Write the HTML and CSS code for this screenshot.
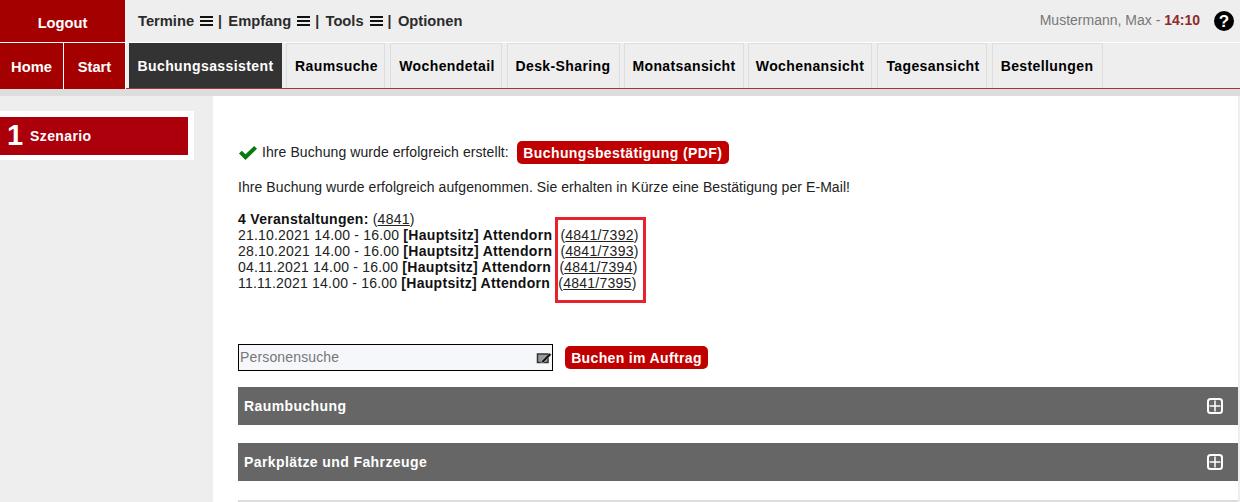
FILE: index.html
```html
<!DOCTYPE html>
<html lang="de">
<head>
<meta charset="utf-8">
<title>Buchungsassistent</title>
<link rel="stylesheet" href="styles.css">
</head>
<body>
<header class="top">
  <a class="logout">Logout</a>
  <nav class="menu">
    <span class="menu-item">Termine <svg class="burger" viewBox="0 0 13 10"><path d="M0 1h13M0 5h13M0 9h13"/></svg></span><span class="sep">|</span>
    <span class="menu-item">Empfang <svg class="burger" viewBox="0 0 13 10"><path d="M0 1h13M0 5h13M0 9h13"/></svg></span><span class="sep">|</span>
    <span class="menu-item">Tools <svg class="burger" viewBox="0 0 13 10"><path d="M0 1h13M0 5h13M0 9h13"/></svg></span><span class="sep">|</span>
    <span class="menu-item">Optionen</span>
  </nav>
  <div class="user">Mustermann, Max - <b>14:10</b></div>
  <svg class="help" viewBox="0 0 20 20"><circle cx="10" cy="10" r="10" fill="#000"/><text x="10" y="16" text-anchor="middle" class="help-q">?</text></svg>
</header>
<div class="tabrow">
  <a class="home home-first">Home</a>
  <a class="home home-second">Start</a>
  <div class="tabs">
    <a class="tab active t1">Buchungsassistent</a>
    <a class="tab t2">Raumsuche</a>
    <a class="tab t3">Wochendetail</a>
    <a class="tab t4">Desk-Sharing</a>
    <a class="tab t5">Monatsansicht</a>
    <a class="tab t6">Wochenansicht</a>
    <a class="tab t7">Tagesansicht</a>
    <a class="tab t8">Bestellungen</a>
  </div>
</div>
<div class="stripe"></div>
<div class="body">
  <aside class="side">
    <div class="step-card"><div class="step"><span class="num">1</span><span class="step-label">Szenario</span></div></div>
  </aside>
  <main class="main">
    <div class="success">
      <svg class="check" viewBox="0 0 18 14"><path d="M0 7.500 2.800 4.700l3.700 3.600L15.200 0 18 2.800 6.500 14z"/></svg>
      <span>Ihre Buchung wurde erfolgreich erstellt:</span>
      <a class="btn btn-pdf">Buchungsbestätigung (PDF)</a>
    </div>
    <p class="note">Ihre Buchung wurde erfolgreich aufgenommen. Sie erhalten in Kürze eine Bestätigung per E-Mail!</p>
    <div class="list">
      <div class="redbox"></div>
      <div><b>4 Veranstaltungen:</b> (<a class="lnk">4841</a>)</div>
      <div>21.10.2021 14.00 - 16.00 <b>[Hauptsitz] Attendorn</b> &nbsp;(<a class="lnk">4841/7392</a>)</div>
      <div>28.10.2021 14.00 - 16.00 <b>[Hauptsitz] Attendorn</b> &nbsp;(<a class="lnk">4841/7393</a>)</div>
      <div>04.11.2021 14.00 - 16.00 <b>[Hauptsitz] Attendorn</b> &nbsp;(<a class="lnk">4841/7394</a>)</div>
      <div>11.11.2021 14.00 - 16.00 <b>[Hauptsitz] Attendorn</b> &nbsp;(<a class="lnk">4841/7395</a>)</div>
    </div>
    <div class="search-row">
      <div class="search">
        <span class="ph">Personensuche</span>
        <svg class="edit" viewBox="0 0 16 12"><path class="edit-box" d="M1.500 2h10.500v8.500H1.500z"/><path class="edit-pen" d="M5.500 9 13.500 1 15.500 2.800 7.500 10.500l-2.500.5z"/></svg>
      </div>
      <a class="btn btn-buchen">Buchen im Auftrag</a>
    </div>
    <section class="bar"><span>Raumbuchung</span><svg class="plus" viewBox="0 0 16 16"><rect x="1" y="1" width="14" height="14" rx="2.500"/><path class="plus-mark" d="M8 2.500v11M2.500 8h11"/></svg></section>
    <section class="bar bar-second"><span>Parkplätze und Fahrzeuge</span><svg class="plus" viewBox="0 0 16 16"><rect x="1" y="1" width="14" height="14" rx="2.500"/><path class="plus-mark" d="M8 2.500v11M2.500 8h11"/></svg></section>
    <div class="rule"></div>
  </main>
</div>
</body>
</html>
```
FILE: styles.css
```css
* { box-sizing: border-box; }
html, body { margin: 0; height: 502px; overflow: hidden; }
body { background: #eee; font-family: "Liberation Sans", Arial, sans-serif; font-size: 14px; color: #222; }
.top { display: flex; align-items: stretch; height: 43px; background: #eee; border-bottom: 1px solid #fff; }
.logout { width: 125px; background: #a50000; color: #fff; font-weight: 700; font-size: 14.7px; display: flex; align-items: center; justify-content: center; padding-top: 4px; }
.menu { display: flex; align-items: center; padding: 0 0 0 13px; font-weight: 700; font-size: 14.7px; color: #2b2b2b; height: 42px; }
.menu-item { display: inline-flex; align-items: center; gap: 6px; }
.burger { width: 13px; height: 10px; stroke: #111; stroke-width: 2; fill: none; shape-rendering: crispEdges; }
.sep { margin: 0 6.4px 0 5px; font-size: 14px; }
.user { margin-left: auto; padding-top: 12px; font-size: 14px; color: #777; }
.user b { color: #8f2a2a; }
.help { width: 20px; height: 20px; margin: 11px 6px 0 14px; }
.help-q { font: 700 17px "Liberation Sans", sans-serif; fill: #fff; }
.tabrow { display: flex; height: 46px; background: #eee; border-bottom: 1px solid #a33; }
.home { background: #a50000; color: #fff; font-weight: 700; font-size: 14.7px; display: flex; align-items: center; justify-content: center; height: 46px; padding-top: 1px; }
.home-first { width: 64px; border-right: 1px solid #fff; }
.home-second { width: 62px; border-right: 1px solid #fff; }
.tabs { display: flex; margin-left: 3px; height: 45px; }
.tab { display: flex; align-items: center; justify-content: center; background: #eee; border: 1px solid #ddd; border-bottom: 0; color: #000; font-weight: 700; font-size: 14px; letter-spacing: .4px; padding-bottom: 1px; }
.tab.active { background: #333; color: #fff; border-color: #333; }
.t1 { width: 153px; }
.t2 { width: 99px; margin-left: 4px; padding-left: 2px; }
.t3 { width: 112px; margin-left: 5px; padding-left: 2px; }
.t4 { width: 113px; margin-left: 5px; padding-right: 1px; }
.t5 { width: 120px; margin-left: 4px; }
.t6 { width: 124px; margin-left: 4px; }
.t7 { width: 110px; margin-left: 5px; padding-left: 2px; }
.t8 { width: 111px; margin-left: 5px; padding-right: 1px; }
.stripe { height: 7px; background: #ddd; }
.body { display: flex; height: 406px; }
.side { width: 213px; padding-top: 15px; }
.step-card { width: 194px; height: 49px; background: #fff; padding: 6px 6px 5px 0; }
.step { height: 38px; background: #ab000b; color: #fff; display: flex; align-items: center; font-weight: 700; }
.num { font-size: 29px; width: 30px; padding-left: 7px; margin-top: -2px; }
.step-label { font-size: 14px; letter-spacing: .4px; margin-top: -1px; }
.main { width: 1025px; background: #fff; padding: 45px 0 0 25px; position: relative; }
.success { display: flex; align-items: center; height: 23px; }
.check { width: 18px; height: 14px; fill: #0a7a10; margin: 1px 5px 0 1px; }
.success span { letter-spacing: .08px; margin-top: -1px; }
.btn { display: inline-flex; align-items: center; justify-content: center; background: #c00000; color: #fff; font-weight: 700; font-size: 14px; height: 23px; border-radius: 5px; letter-spacing: .35px; }
.btn-pdf { width: 212px; margin-left: 8px; letter-spacing: .4px; }
.note { margin: 15px 0 0; line-height: 16px; letter-spacing: .07px; }
.list { position: relative; margin-top: 16px; line-height: 16px; color: #222; letter-spacing: .2px; }
.list b { color: #111; letter-spacing: .3px; }
.lnk { text-decoration: underline; letter-spacing: .25px; }
.redbox { position: absolute; left: 317px; top: 6px; width: 91px; height: 86px; border: 3px solid #e8212e; }
.search-row { display: flex; align-items: center; margin-top: 53px; height: 27px; }
.search { width: 315px; height: 27px; background: #f5f7fb; border: 1px solid #000; display: flex; align-items: center; justify-content: space-between; padding: 0 0 2px 1px; }
.ph { color: #777; letter-spacing: .15px; }
.edit { width: 16px; height: 12px; margin-top: 3px; }
.edit-box { fill: #999; stroke: #333; stroke-width: 1.500; }
.edit-pen { fill: #111; stroke: #fff; stroke-width: .4; }
.btn-buchen { width: 143px; margin-left: 12px; }
.bar { display: flex; align-items: center; justify-content: space-between; height: 38px; background: #666; color: #fff; font-weight: 700; font-size: 14px; margin-top: 16px; padding: 0 15px 0 6px; letter-spacing: .4px; }
.bar-second { margin-top: 18px; }
.plus { width: 16px; height: 16px; fill: none; stroke: #fff; stroke-width: 2; }
.plus-mark { stroke-width: 1.500; }
.rule { height: 2px; background: #ddd; margin-top: 19px; }
```
